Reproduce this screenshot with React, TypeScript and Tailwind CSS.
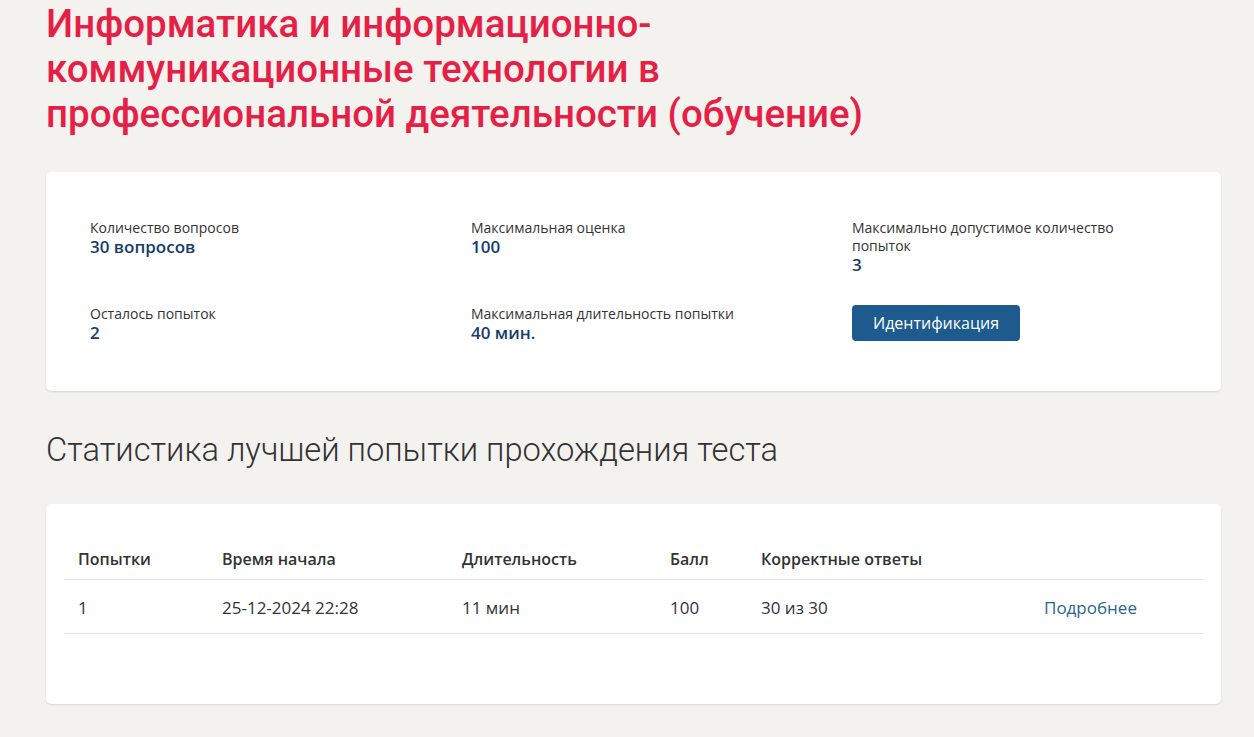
export default function App() {
  const stats = [
    { label: 'Количество вопросов', value: '30 вопросов' },
    { label: 'Максимальная оценка', value: '100' },
    { label: 'Максимально допустимое количество попыток', value: '3' },
    { label: 'Осталось попыток', value: '2' },
    { label: 'Максимальная длительность попытки', value: '40 мин.' },
  ];

  return (
    <div className="min-h-screen bg-[#f3f2ef] pb-10 font-['Open_Sans',sans-serif] text-[#333]">
      <div className="ml-[46px] w-[1175px]">
        <h1 className="pt-[1px] font-['Roboto',sans-serif] text-[38.5px] font-medium leading-[45px] text-[#e51f45]">
          Информатика и информационно-
          <br />
          коммуникационные технологии в
          <br />
          профессиональной деятельности (обучение)
        </h1>

        <section className="mt-[36px] rounded-[5px] bg-white px-[44px] pb-[48px] pt-[47px] shadow-[0_1px_2px_rgba(0,0,0,0.12)]">
          <div className="grid grid-cols-[300px_300px_300px] gap-x-[81px] gap-y-[30px]">
            {stats.map((item) => (
              <div key={item.label}>
                <p className="text-[14px] leading-[18px] text-[#333]">{item.label}</p>
                <p className="text-[17px] font-semibold leading-[20px] text-[#173d68]">{item.value}</p>
              </div>
            ))}
            <div>
              <button
                type="button"
                className="h-[36px] w-[168px] rounded-[4px] bg-[#1d5a8e] text-[16px] text-white"
              >
                Идентификация
              </button>
            </div>
          </div>
        </section>

        <h2 className="mt-[39px] font-['Roboto',sans-serif] text-[32.7px] font-light leading-[40px] text-[#333]">
          Статистика лучшей попытки прохождения теста
        </h2>

        <section className="mt-[34px] rounded-[5px] bg-white px-[18px] pb-[70px] pt-[32px] shadow-[0_1px_2px_rgba(0,0,0,0.12)]">
          <table className="w-full border-collapse text-left text-[16px]">
            <thead>
              <tr className="border-b border-[#e2e2e2]">
                <th className="w-[144px] px-[14px] pb-[9px] pt-[12px] font-semibold leading-[22px]">Попытки</th>
                <th className="w-[240px] px-[14px] pb-[9px] pt-[12px] font-semibold leading-[22px]">Время начала</th>
                <th className="w-[208px] px-[14px] pb-[9px] pt-[12px] font-semibold leading-[22px]">Длительность</th>
                <th className="w-[91px] px-[14px] pb-[9px] pt-[12px] font-semibold leading-[22px]">Балл</th>
                <th className="w-[283px] px-[14px] pb-[9px] pt-[12px] font-semibold leading-[22px]">Корректные ответы</th>
                <th className="px-[14px] pb-[9px] pt-[12px]"></th>
              </tr>
            </thead>
            <tbody className="text-[17px]">
              <tr className="border-b border-[#e2e2e2]">
                <td className="px-[14px] pb-[14px] pt-[17px] leading-[22px]">1</td>
                <td className="px-[14px] pb-[14px] pt-[17px] leading-[22px]">25-12-2024 22:28</td>
                <td className="px-[14px] pb-[14px] pt-[17px] leading-[22px]">11 мин</td>
                <td className="px-[14px] pb-[14px] pt-[17px] leading-[22px]">100</td>
                <td className="px-[14px] pb-[14px] pt-[17px] leading-[22px]">30 из 30</td>
                <td className="px-[14px] pb-[14px] pt-[17px] leading-[22px]">
                  <a href="#" className="text-[#2a668c]">Подробнее</a>
                </td>
              </tr>
            </tbody>
          </table>
        </section>
      </div>
    </div>
  );
}
